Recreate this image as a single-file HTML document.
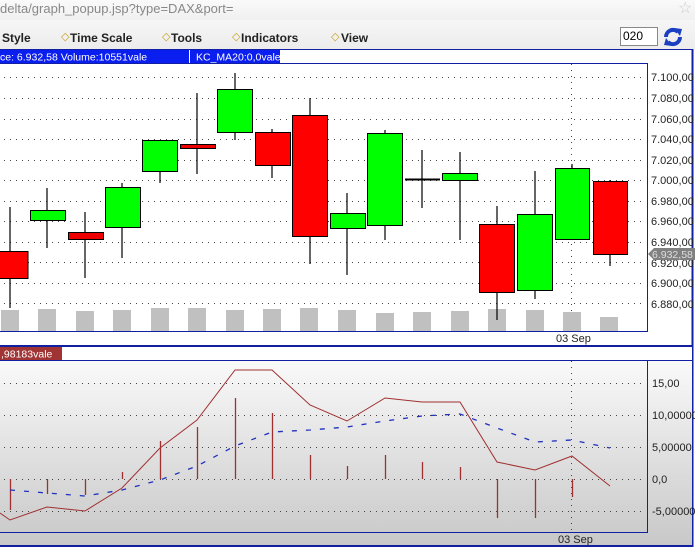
<!DOCTYPE html>
<html><head><style>
body{margin:0;width:695px;height:547px;overflow:hidden;background:#fff;font-family:"Liberation Sans",sans-serif;position:relative}
.url{position:absolute;left:0;top:0;width:695px;height:20px;background:linear-gradient(#fafafa,#f0f0f0);color:#888;font-size:13px;line-height:18px}
.tb{position:absolute;left:0;top:20px;width:695px;height:29px;background:linear-gradient(#f6f6f6,#ececec)}
.m{position:absolute;top:11px;font-size:12px;font-weight:bold;color:#222}
.d{position:absolute;top:10px;color:#c8a020;font-size:11px}
</style></head><body>
<div class="url">delta/graph_popup.jsp?type=DAX&amp;port=<span style="position:absolute;left:678px;top:0;color:#ccc;font-size:16px">☆</span></div>
<div class="tb">
<div class="m" style="left:2px">Style</div>
<div class="d" style="left:61px">◇</div><div class="m" style="left:70px">Time Scale</div>
<div class="d" style="left:162px">◇</div><div class="m" style="left:171px">Tools</div>
<div class="d" style="left:232px">◇</div><div class="m" style="left:241px">Indicators</div>
<div class="d" style="left:331px">◇</div><div class="m" style="left:341px">View</div>
<div style="position:absolute;left:620px;top:7px;border:1px solid #888;background:#fff;font-size:12px;line-height:17px;padding-left:2px;box-sizing:border-box;width:38px;height:19px">020</div>
<svg style="position:absolute;left:663px;top:6px" width="20" height="22" viewBox="0 0 20 22"><path d="M3 11 A7 7 0 0 1 15 6" fill="none" stroke="#1a3fc0" stroke-width="4"/><path d="M17 11 A7 7 0 0 1 5 16" fill="none" stroke="#1a3fc0" stroke-width="4"/><path d="M11 2 L19 3 L17 10Z M9 20 L1 19 L3 12Z" fill="#1a3fc0"/></svg>
</div>
<svg style="position:absolute;left:0;top:0" width="695" height="547">
<defs><linearGradient id="g" x1="0" y1="0" x2="0" y2="1"><stop offset="0" stop-color="#fdfdfd"/><stop offset="1" stop-color="#c8c8c8"/></linearGradient></defs>
<rect x="0" y="49" width="693" height="297" fill="#fff"/>
<line x1="0" y1="49.5" x2="693" y2="49.5" stroke="#1020a0"/>
<line x1="692.5" y1="49" x2="692.5" y2="547" stroke="#1020a0" stroke-width="2"/>
<rect x="0" y="50" width="280" height="13" fill="#0a1ef0"/>
<line x1="189.5" y1="50" x2="189.5" y2="63" stroke="#fff"/>
<text x="0" y="60.5" font-size="10.5" fill="#fff" font-family="Liberation Sans">ce: 6.932,58 Volume:10551vale</text>
<text x="196" y="60.5" font-size="10.5" fill="#fff" font-family="Liberation Sans">KC_MA20:0,0vale</text>
<line x1="0" y1="63.5" x2="648" y2="63.5" stroke="#1020a0"/>
<line x1="647.5" y1="63" x2="647.5" y2="331" stroke="#1020a0"/>
<line x1="0" y1="331.5" x2="648" y2="331.5" stroke="#1020a0"/>
<g stroke="#444" stroke-dasharray="1 5" stroke-width="1">
<line x1="4" y1="77.5" x2="646" y2="77.5"/><line x1="4" y1="98.5" x2="646" y2="98.5"/><line x1="4" y1="119.5" x2="646" y2="119.5"/><line x1="4" y1="139.5" x2="646" y2="139.5"/><line x1="4" y1="160.5" x2="646" y2="160.5"/><line x1="4" y1="180.5" x2="646" y2="180.5"/><line x1="4" y1="201.5" x2="646" y2="201.5"/><line x1="4" y1="221.5" x2="646" y2="221.5"/><line x1="4" y1="242.5" x2="646" y2="242.5"/><line x1="4" y1="262.5" x2="646" y2="262.5"/><line x1="4" y1="283.5" x2="646" y2="283.5"/><line x1="4" y1="303.5" x2="646" y2="303.5"/>
<line x1="571.5" y1="64" x2="571.5" y2="331"/>
</g>
<g font-size="11" fill="#222" font-family="Liberation Sans">
<text x="651" y="81">7.100,00</text><text x="651" y="102">7.080,00</text><text x="651" y="123">7.060,00</text><text x="651" y="143">7.040,00</text><text x="651" y="164">7.020,00</text><text x="651" y="184">7.000,00</text><text x="651" y="205">6.980,00</text><text x="651" y="225">6.960,00</text><text x="651" y="246">6.940,00</text><text x="651" y="267">6.920,00</text><text x="651" y="287">6.900,00</text><text x="651" y="308">6.880,00</text>
<text x="556" y="342">03 Sep</text>
</g>
<path d="M648 254 L654 248 L695 248 L695 260 L654 260Z" fill="#808080"/>
<text x="652" y="258" font-size="10.5" fill="#ddd" font-family="Liberation Sans">6.932,58</text>
<g fill="#c0c0c0">
<rect x="1" y="310" width="18" height="21"/><rect x="38" y="309" width="18" height="22"/><rect x="76" y="311" width="18" height="20"/><rect x="113" y="310" width="18" height="21"/><rect x="151" y="308" width="18" height="23"/><rect x="188" y="308" width="18" height="23"/><rect x="226" y="310" width="18" height="21"/><rect x="263" y="309" width="18" height="22"/><rect x="300" y="308" width="18" height="23"/><rect x="338" y="310" width="18" height="21"/><rect x="376" y="313" width="18" height="18"/><rect x="413" y="312" width="18" height="19"/><rect x="451" y="311" width="18" height="20"/><rect x="488" y="309" width="18" height="22"/><rect x="526" y="310" width="18" height="21"/><rect x="563" y="312" width="18" height="19"/><rect x="600" y="317" width="18" height="14"/>
</g>
<g stroke="#000" stroke-width="1.2">
<line x1="10" y1="207" x2="10" y2="308"/><line x1="47" y1="188" x2="47" y2="248"/><line x1="85" y1="212" x2="85" y2="278"/><line x1="122" y1="183" x2="122" y2="258"/><line x1="160" y1="140" x2="160" y2="183"/><line x1="197" y1="93" x2="197" y2="174"/><line x1="235" y1="73" x2="235" y2="140"/><line x1="272" y1="129" x2="272" y2="178"/><line x1="310" y1="98" x2="310" y2="264"/><line x1="347" y1="193" x2="347" y2="275"/><line x1="385" y1="130" x2="385" y2="240"/><line x1="422" y1="150" x2="422" y2="208"/><line x1="460" y1="152" x2="460" y2="240"/><line x1="497" y1="206" x2="497" y2="320"/><line x1="535" y1="171" x2="535" y2="299"/><line x1="572" y1="164" x2="572" y2="240"/><line x1="610" y1="180" x2="610" y2="266"/>
</g>
<g stroke="#000" stroke-width="1">
<rect x="-5" y="251.5" width="33" height="27" fill="#f00"/>
<rect x="30.5" y="210.5" width="35" height="10" fill="#0f0"/>
<rect x="68.5" y="232.5" width="35" height="7" fill="#e00"/>
<rect x="105.5" y="187.5" width="35" height="40" fill="#0f0"/>
<rect x="142.5" y="140.5" width="35" height="31" fill="#0f0"/>
<rect x="180.5" y="144.5" width="35" height="4" fill="#e00"/>
<rect x="217.5" y="89.5" width="35" height="43" fill="#0f0"/>
<rect x="255.5" y="132.5" width="35" height="33" fill="#f00"/>
<rect x="292.5" y="115.5" width="35" height="121" fill="#f00"/>
<rect x="330.5" y="213.5" width="35" height="15" fill="#0f0"/>
<rect x="367.5" y="133.5" width="35" height="92" fill="#0f0"/>
<line x1="405" y1="179.5" x2="440" y2="179.5" stroke-width="2"/>
<rect x="442.5" y="173.5" width="35" height="7" fill="#0f0"/>
<rect x="479.5" y="224.5" width="35" height="68" fill="#f00"/>
<rect x="517.5" y="214.5" width="35" height="76" fill="#0f0"/>
<rect x="555.5" y="168.5" width="34" height="71" fill="#0f0"/>
<rect x="593.5" y="181.5" width="34" height="73" fill="#f00"/>
</g>
<line x1="0" y1="346" x2="693" y2="346" stroke="#1020a0" stroke-width="2"/>
<rect x="0" y="347" width="692" height="199" fill="url(#g)"/>
<rect x="0" y="347" width="692" height="13" fill="#fff"/>
<rect x="0" y="347" width="62" height="13" fill="#a03434"/>
<text x="1" y="357.5" font-size="10.5" fill="#fff" font-family="Liberation Sans">,98183vale</text>
<line x1="0" y1="360.5" x2="692" y2="360.5" stroke="#1020a0"/>
<line x1="647.5" y1="360" x2="647.5" y2="532" stroke="#1020a0"/>
<line x1="0" y1="532.5" x2="648" y2="532.5" stroke="#1020a0"/>
<line x1="0" y1="546" x2="693" y2="546" stroke="#1020a0" stroke-width="2"/>
<g stroke="#444" stroke-dasharray="1 5">
<line x1="4" y1="383.5" x2="646" y2="383.5"/><line x1="4" y1="415.5" x2="646" y2="415.5"/><line x1="4" y1="447.5" x2="646" y2="447.5"/><line x1="4" y1="479.5" x2="646" y2="479.5"/><line x1="4" y1="511.5" x2="646" y2="511.5"/>
<line x1="571.5" y1="361" x2="571.5" y2="532"/>
</g>
<g font-size="11" fill="#222" font-family="Liberation Sans">
<text x="652" y="387">15,00</text><text x="652" y="419">10,00000</text><text x="652" y="451">5,00000</text><text x="652" y="483">0,0</text><text x="652" y="515">-5,00000</text>
<text x="558" y="543">03 Sep</text>
</g>
<g stroke="#a03030" stroke-width="1.3">
<line x1="10.5" y1="479" x2="10.5" y2="510"/><line x1="47.5" y1="479" x2="47.5" y2="494"/><line x1="85.5" y1="479" x2="85.5" y2="495"/><line x1="122.5" y1="472" x2="122.5" y2="479"/><line x1="160.5" y1="441" x2="160.5" y2="479"/><line x1="197.5" y1="427" x2="197.5" y2="479"/><line x1="235.5" y1="398" x2="235.5" y2="479"/><line x1="272.5" y1="413" x2="272.5" y2="479"/><line x1="310.5" y1="455" x2="310.5" y2="479"/><line x1="347.5" y1="466" x2="347.5" y2="479"/><line x1="385.5" y1="455" x2="385.5" y2="479"/><line x1="422.5" y1="462" x2="422.5" y2="479"/><line x1="460.5" y1="467" x2="460.5" y2="479"/><line x1="497.5" y1="479" x2="497.5" y2="518"/><line x1="535.5" y1="479" x2="535.5" y2="518"/><line x1="572.5" y1="479" x2="572.5" y2="497"/>
</g>
<polyline fill="none" stroke="#a03030" stroke-width="1" points="0,513 10,520 47,507 85,511 122,488 160,448 197,420 235,370 272,370 310,405 347,421 385,398 422,402 460,402 497,462 535,470 572,456 610,486"/>
<polyline fill="none" stroke="#2030c0" stroke-width="1.3" stroke-dasharray="5 9" points="10,490 47,493 85,496 122,490 160,480 197,466 235,446 272,432 310,430 347,427 385,421 422,416 460,414 497,428 535,442 572,440 610,448"/>
</svg>
</body></html>
